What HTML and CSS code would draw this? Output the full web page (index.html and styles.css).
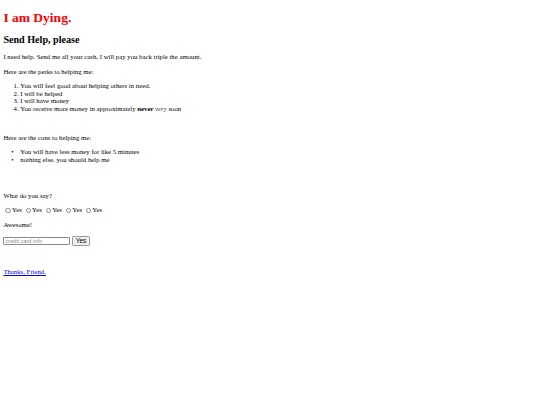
FILE: index.html
```html
<!DOCTYPE html>
<html>
<head>
<meta charset="utf-8">
<title>I am Dying.</title>
<link rel="stylesheet" href="styles.css">
</head>
<body class="page">
<h1 class="title">I am Dying.</h1>
<h2 class="subtitle">Send Help, please</h2>
<p class="text">I need help. Send me all your cash, I will pay you back triple the amount.</p>
<p class="text">Here are the perks to helping me:</p>
<ol class="list">
<li>You will feel good about helping others in need.</li>
<li>I will be helped</li>
<li>I will have money</li>
<li>You receive more money in approximately <b>never</b> <i class="soft">very</i> soon</li>
</ol>
<br>
<p class="text">Here are the cons to helping me:</p>
<ul class="list bullets">
<li>You will have less money for like 5 minutes</li>
<li>nothing else, you should help me</li>
</ul>
<br><br>
<p class="text">What do you say?</p>
<form class="choices">
<input class="radio" type="radio" name="say">Yes
<input class="radio" type="radio" name="say">Yes
<input class="radio" type="radio" name="say">Yes
<input class="radio" type="radio" name="say">Yes
<input class="radio" type="radio" name="say">Yes
</form>
<p class="text">Awesome!</p>
<form class="pay">
<input class="field" type="text" placeholder="credit card info"> <button class="btn" type="button">Yes</button>
</form>
<br><br><br>
<a class="link" href="#">Thanks, Friend.</a>
</body>
</html>
```

FILE: styles.css
```css
html { background: #fff; }
.page {
  margin: 3.375px;
  font-family: "Liberation Serif", "Times New Roman", serif;
  font-size: 6.75px;
  line-height: 7.6px;
  color: #000;
}
.title {
  font-size: 13.5px;
  line-height: 15px;
  margin: 7px 0 7px;
  color: red;
  font-weight: bold;
}
.subtitle {
  font-size: 10.125px;
  line-height: 11px;
  margin: 8.5px 0 8.6px;
  font-weight: bold;
}
.text { margin: 6.75px 0; }
.list {
  margin: 6.75px 0;
  padding-left: 16.875px;
}
.bullets li::marker {
  content: "\2022\2003";
  font-family: "Liberation Serif", serif;
}
.soft { color: #333; }
.choices {
  margin: 0;
  line-height: 8px;
}
.radio {
  -webkit-appearance: none;
  appearance: none;
  box-sizing: border-box;
  width: 5.2px;
  height: 5.2px;
  border: 0.6px solid #8a8a8a;
  border-radius: 50%;
  background: #fff;
  margin: 1.3px 1.3px 0 2.1px;
  vertical-align: -0.6px;
}
.pay {
  margin: 0;
  line-height: 9.3px;
}
.field {
  box-sizing: border-box;
  font-family: "Liberation Sans", Arial, sans-serif;
  font-size: 5.625px;
  width: 67px;
  height: 7.8px;
  padding: 0 0.9px;
  border: 0.7px solid #8a8a8a;
  border-radius: 1px;
  margin: 0;
  vertical-align: middle;
}
.field::placeholder { color: #8a8a8a; }
.btn {
  box-sizing: border-box;
  font-family: "Liberation Sans", Arial, sans-serif;
  font-size: 6.6px;
  line-height: 7px;
  height: 9.6px;
  padding: 0 2.6px;
  border: 0.7px solid #9a9a9a;
  border-radius: 1.2px;
  background: #efefef;
  color: #000;
  margin: 0;
  vertical-align: middle;
}
.link {
  color: #0000ee;
  text-decoration: underline;
  text-decoration-thickness: 1px;
  text-underline-offset: 0.5px;
}
```
